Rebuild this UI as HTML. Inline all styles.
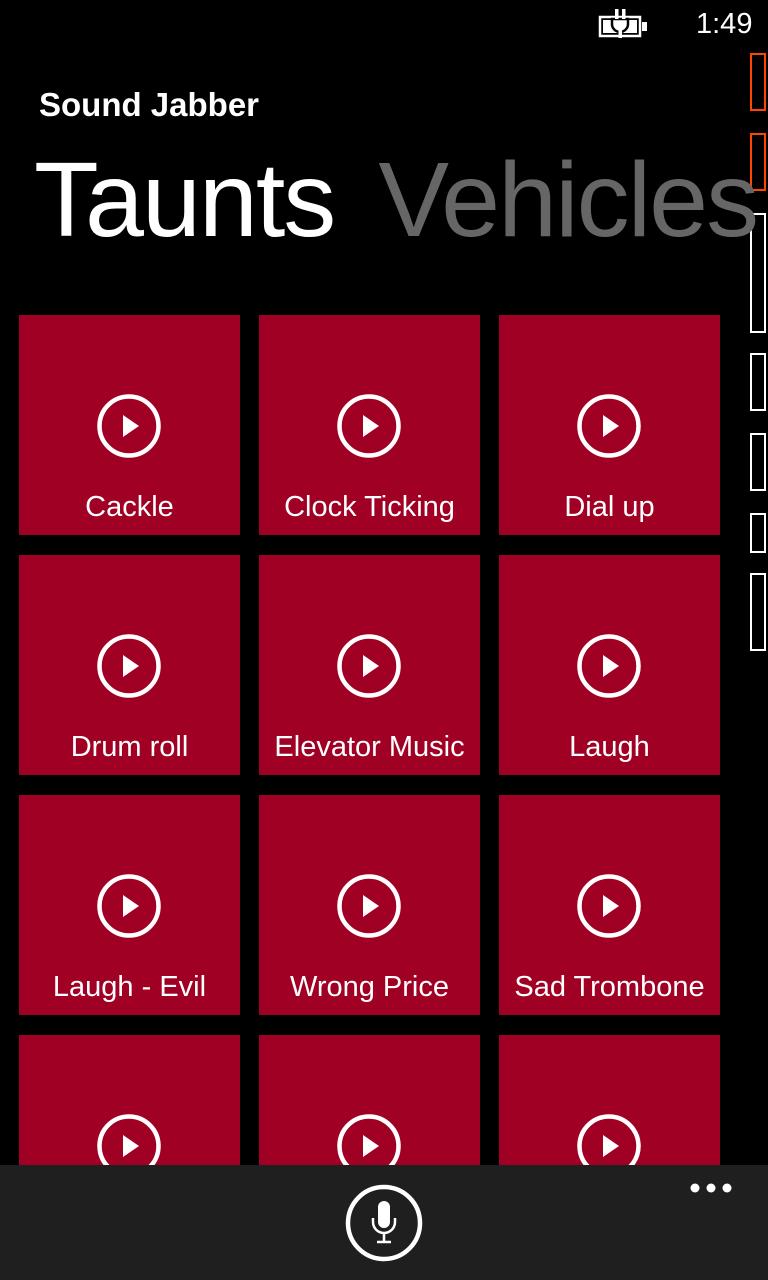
<!DOCTYPE html>
<html><head><meta charset="utf-8"><style>
*{margin:0;padding:0;box-sizing:border-box}
body{width:768px;height:1280px;background:#000;position:relative;overflow:hidden;font-family:"Liberation Sans",sans-serif;color:#fff}
.abs{position:absolute}
.tile{position:absolute;width:221px;height:220px;background:#a00024}
.tile svg{position:absolute;left:78px;top:79px}
.tile span{position:absolute;left:-10px;right:-10px;top:174px;text-align:center;font-size:29px;white-space:nowrap;line-height:36px}
.dbg{position:absolute;left:750px;width:16px;border:2px solid #fff}
</style></head><body>
<div class="abs" style="left:696px;top:6px;font-size:29px;line-height:36px">1:49</div>
<svg class="abs" style="left:598px;top:8px" width="54" height="32" viewBox="0 0 54 32">
<rect x="2" y="9" width="40" height="19" fill="none" stroke="#fff" stroke-width="2.5"/>
<rect x="5" y="12" width="34" height="13" fill="#fff"/>
<rect x="44" y="14" width="5" height="9" fill="#fff"/>
<path d="M14 11h16v5a8 8 0 0 1-16 0z" fill="#fff" stroke="#000" stroke-width="2.5"/>
<rect x="17" y="1" width="3.5" height="10" fill="#fff"/><rect x="24" y="1" width="3.5" height="10" fill="#fff"/>
<rect x="20.5" y="22" width="3.5" height="8" fill="#fff"/>
</svg>
<div class="abs" style="left:750px;top:53px;width:16px;height:58px;border:2px solid #ff4500"></div>
<div class="abs" style="left:750px;top:133px;width:16px;height:58px;border:2px solid #ff4500"></div>
<div class="dbg" style="top:213px;height:120px"></div>
<div class="dbg" style="top:353px;height:58px"></div>
<div class="dbg" style="top:433px;height:58px"></div>
<div class="dbg" style="top:513px;height:40px"></div>
<div class="dbg" style="top:573px;height:78px"></div>
<div class="abs" style="left:39px;top:86px;font-size:33px;font-weight:bold;line-height:38px">Sound Jabber</div>
<div class="abs" style="left:34px;top:140px;font-size:106px;letter-spacing:-2px;line-height:120px;white-space:nowrap">Taunts<span style="color:#666;margin-left:44px">Vehicles</span></div>
<svg width="0" height="0" style="position:absolute"><defs><g id="p"><circle cx="32" cy="32" r="29.5" fill="none" stroke="#fff" stroke-width="4.5"/><path d="M26 21L42 32L26 43z" fill="#fff"/></g></defs></svg>

<div class="tile" style="left:19px;top:315px"><svg width="64" height="64"><use href="#p"/></svg><span>Cackle</span></div>
<div class="tile" style="left:259px;top:315px"><svg width="64" height="64"><use href="#p"/></svg><span>Clock Ticking</span></div>
<div class="tile" style="left:499px;top:315px"><svg width="64" height="64"><use href="#p"/></svg><span>Dial up</span></div>
<div class="tile" style="left:19px;top:555px"><svg width="64" height="64"><use href="#p"/></svg><span>Drum roll</span></div>
<div class="tile" style="left:259px;top:555px"><svg width="64" height="64"><use href="#p"/></svg><span>Elevator Music</span></div>
<div class="tile" style="left:499px;top:555px"><svg width="64" height="64"><use href="#p"/></svg><span>Laugh</span></div>
<div class="tile" style="left:19px;top:795px"><svg width="64" height="64"><use href="#p"/></svg><span>Laugh - Evil</span></div>
<div class="tile" style="left:259px;top:795px"><svg width="64" height="64"><use href="#p"/></svg><span>Wrong Price</span></div>
<div class="tile" style="left:499px;top:795px"><svg width="64" height="64"><use href="#p"/></svg><span>Sad Trombone</span></div>
<div class="tile" style="left:19px;top:1035px"><svg width="64" height="64"><use href="#p"/></svg></div>
<div class="tile" style="left:259px;top:1035px"><svg width="64" height="64"><use href="#p"/></svg></div>
<div class="tile" style="left:499px;top:1035px"><svg width="64" height="64"><use href="#p"/></svg></div>

<div class="abs" style="left:0;top:1165px;width:768px;height:115px;background:#1f1f1f"></div>
<svg class="abs" style="left:344px;top:1183px" width="80" height="80" viewBox="0 0 80 80">
<circle cx="40" cy="40" r="36" fill="none" stroke="#fff" stroke-width="4.5"/>
<rect x="34" y="18" width="12" height="27" rx="6" fill="#fff"/>
<path d="M29 35v4a11 11 0 0 0 22 0v-4" fill="none" stroke="#fff" stroke-width="2.5"/>
<path d="M40 50v8M33 59h14" stroke="#fff" stroke-width="2.5"/>
</svg>
<svg class="abs" style="left:686px;top:1180px" width="48" height="16"><circle cx="9" cy="8" r="4.5" fill="#fff"/><circle cx="25" cy="8" r="4.5" fill="#fff"/><circle cx="41" cy="8" r="4.5" fill="#fff"/></svg>
</body></html>
